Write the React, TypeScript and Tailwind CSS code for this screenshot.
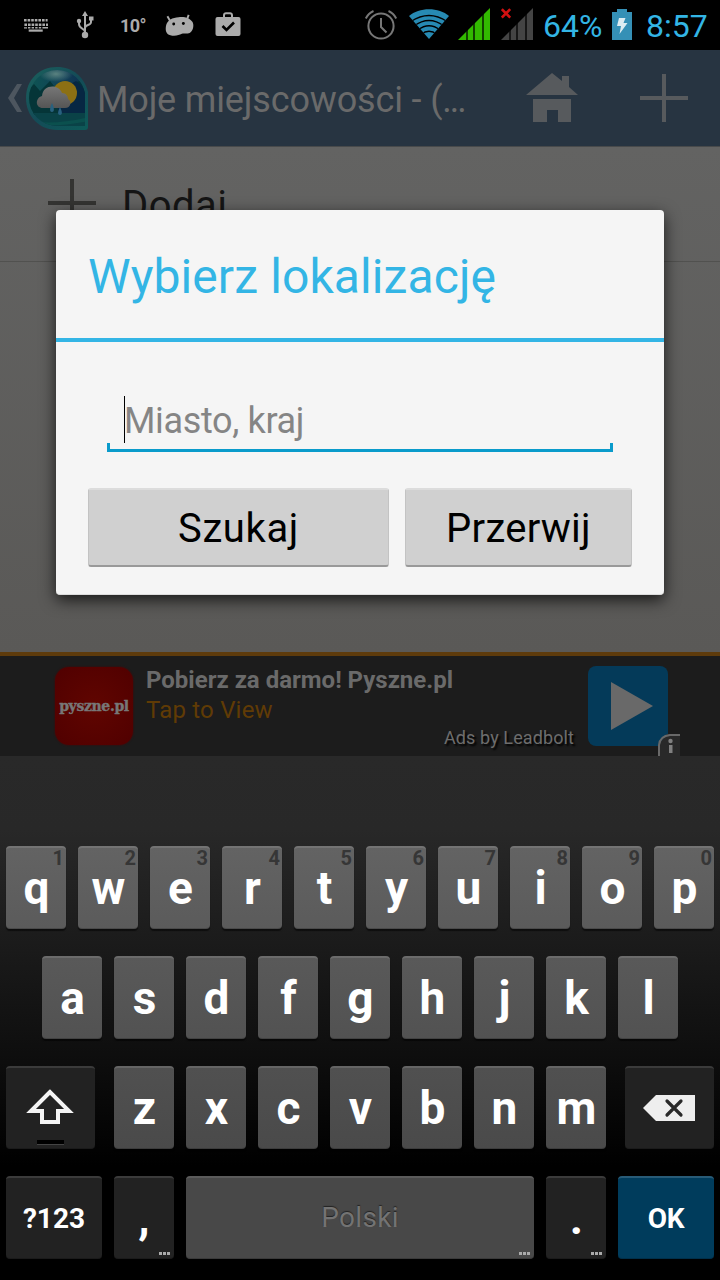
import React from "react";

function StatusBar() {
  return (
    <header className="relative flex h-[50px] shrink-0 items-center bg-black">
      <svg className="ml-6 h-[13px] w-6 shrink-0" viewBox="0 0 24 13" fill="#ababab">
        {[0, 4.5].map((y) =>
          [0, 3.6, 7.2, 10.8, 14.4, 18, 21.6].map((x) => (
            <rect key={`${x}-${y}`} x={x + (y ? 0.4 : 0)} y={y} width={x > 21 ? 2 : 2.6} height="2.5" />
          )),
        )}
        <path d="M0 8.200h3v1.200H0zM4 8h2.400v1.400H4zM7.600 8H10v1.400H7.600zM11.200 8h2.400v1.400h-2.400zM14.800 8h2.400v1.400h-2.400zM18.400 8H24v1.400h-5.600z" />
        <rect x="4.700" y="10.500" width="14" height="2.200" />
      </svg>
      <svg className="ml-[27px] h-7 w-5 shrink-0" viewBox="0 0 20 28" fill="none" stroke="#ababab">
        <path d="M10 25V4M10 21c0-4-6-3-6-8v-3M10 17c0-4 6-2 6-6V8" strokeWidth="2" />
        <path d="M7 5l3-5 3 5zM14 5.500h4.500v4H14z" fill="#ababab" stroke="none" />
        <circle cx="4" cy="10" r="2.200" fill="#ababab" stroke="none" />
        <circle cx="10" cy="24" r="3.200" fill="#ababab" stroke="none" />
      </svg>
      <span className="mt-[2px] ml-[25px] w-6 whitespace-nowrap text-[18px] leading-none font-bold tracking-[-0.6px] text-[#ababab]">10°</span>
      <svg className="ml-[21px] h-[23px] w-[29px] shrink-0" viewBox="0 0 30 23">
        <path d="M5.500 7L2.500 2M23 4.500l1.500-4" stroke="#ababab" strokeWidth="2" fill="none" />
        <path d="M1 12C2 6 8 3.200 14 3c6-1 12 1 14.500 5 1.500 3 1 8-2 10.500-3 2.500-6 .5-9 1.500-3 1-5 2.500-10 2C2 21.500 0 18 1 12z" fill="#ababab" />
        <circle cx="9" cy="10" r="1.500" />
        <circle cx="19" cy="9.500" r="1.500" />
      </svg>
      <svg className="ml-[21px] h-6 w-[26px] shrink-0 -translate-y-px" viewBox="0 0 26 24">
        <path d="M9 6V3a2 2 0 0 1 2-1.800h4A2 2 0 0 1 17 3v3" fill="none" stroke="#ababab" strokeWidth="2" />
        <rect x=".5" y="5" width="25" height="19" rx="2" fill="#ababab" />
        <path d="M7.500 14l4 4L19 10.500" fill="none" stroke="#000" strokeWidth="2.600" />
      </svg>
      <div className="ml-auto flex shrink-0 items-center">
        <svg className="h-[32px] w-[34px]" viewBox="0 0 34 32" fill="none" stroke="#777" strokeWidth="2">
          <circle cx="17" cy="17" r="12.600" />
          <path d="M17 9v9l5.500 5.500M1.800 9.500C3.500 6 6 3.500 9.500 2M24.500 2c3.500 1.500 6 4 7.700 7.500" />
        </svg>
        <svg className="ml-[11px] h-[32px] w-10 -translate-y-px" viewBox="0 0 40 32">
          <clipPath id="wifi"><path d="M0 8C10-1 30-1 40 8L20 31z" /></clipPath>
          <g clipPath="url(#wifi)">
            <rect width="40" height="32" fill="#278ab3" />
            <path d="M2 13.500Q20 1.500 38 13.500M5 18Q20 7 35 18M9 22Q20 13.500 31 22M12 26.500Q20 20 28 26.500" fill="none" stroke="#000" strokeWidth="1.300" />
          </g>
        </svg>
        <svg className="ml-[9px] h-8 w-8 -translate-y-px" viewBox="0 0 32 32">
          <path d="M0 32L32 0v32z" fill="#32b900" />
          <path d="M9 0v32M16 0v32M25 0v32" stroke="#000" strokeWidth="1.300" />
        </svg>
        <svg className="ml-[11px] h-8 w-8 -translate-y-px" viewBox="0 0 32 32">
          <path d="M0 32L32 0v32z" fill="#444" />
          <path d="M9 0v32M16 0v32M25 0v32" stroke="#000" strokeWidth="1.300" />
          <path d="M.8 1.200l8.400 8.400M9.200 1.200L.8 9.600" stroke="#d11010" strokeWidth="2.600" />
        </svg>
        <span className="w-[68px] pt-px pl-[10px] text-[32px] leading-[50px] text-[#33b5e5]">64%</span>
        <svg className="ml-[11px] h-[31px] w-5 -translate-y-px" viewBox="0 0 20 31">
          <path d="M5 0h10v3h5v28H0V3h5z" fill="#3590b6" />
          <path d="M7 9h6.500l-2 5h4L7.500 25l1.500-8H5z" fill="#ddecf2" />
        </svg>
        <span className="ml-[14px] w-[74px] pt-px text-[32px] leading-[50px] text-[#33b5e5]">8:57</span>
      </div>
    </header>
  );
}

function WeatherIcon() {
  return (
    <svg className="ml-1 h-[63px] w-[63px] shrink-0" viewBox="0 0 63 63">
      <defs>
        <linearGradient id="edge" x1="0" y1="0" x2="1" y2="1">
          <stop stopColor="#1b625d" /><stop offset=".5" stopColor="#144b57" /><stop offset="1" stopColor="#0d5a58" />
        </linearGradient>
        <linearGradient id="sky" x2="1">
          <stop stopColor="#0d5751" /><stop offset=".6" stopColor="#123f58" /><stop offset="1" stopColor="#0c2d4d" />
        </linearGradient>
        <radialGradient id="shine"><stop stopColor="#5a8280" /><stop offset="1" stopColor="#5a8280" stopOpacity="0" /></radialGradient>
        <linearGradient id="cloud" x2="0" y2="1"><stop stopColor="#777" /><stop offset="1" stopColor="#555" /></linearGradient>
        <clipPath id="drop"><path d="M31 3a28 28 0 0 1 28 24v32H31A28 28 0 0 1 31 3z" /></clipPath>
      </defs>
      <path d="M31 0c16 0 27 10 31 25v35q0 3-3 3H31C13 63 0 49 0 31S13 0 31 0z" fill="url(#edge)" />
      <g clipPath="url(#drop)">
        <rect width="63" height="63" fill="url(#sky)" />
        <path d="M0 27l6-8 2-2 6 7 10-10 8 10 8-6 14-4 6 8v26H0z" fill="#053538" />
        <path d="M32 24l18-10 5 4 5 8v24H32z" fill="#072743" />
        <path d="M0 46h63v17H0z" fill="#0a4247" />
        <path d="M0 53q26 6 63-3v4q-32 7-63 3z" fill="#0b504e" />
        <ellipse cx="30" cy="7" rx="17" ry="8" fill="url(#shine)" />
      </g>
      <circle cx="39" cy="26" r="12" fill="#8c7014" />
      <path d="M17 41c-8 0-8-10-1-12 1-12 17-12 20-3 4 0 6 3 6 6 4 2 3 9-3 9z" fill="url(#cloud)" />
      <path d="M26 36c-2 4-3 9 0 9s2-5 0-9zM34 40c-2 4-3 8 0 8s2-4 0-8z" fill="#28617f" />
    </svg>
  );
}

function AppBar() {
  return (
    <nav className="flex h-24 shrink-0 items-center bg-[#273441]">
      <svg className="ml-2 h-7 w-[14px] shrink-0" viewBox="0 0 14 28"><path d="M9 0h5L6 14l8 14H9L0 14z" fill="#4d565f" /></svg>
      <WeatherIcon />
      <h1 className="mt-[3px] ml-2 w-[380px] whitespace-nowrap text-[36px] leading-[48px] tracking-[-0.15px] text-[#6a6a6a]">Moje miejscowości - (<span className="tracking-[-2px]">...</span></h1>
      <svg className="ml-[49px] h-[50px] w-[52px] shrink-0 -translate-y-px" viewBox="0 0 52 50" fill="#575a5d">
        <path d="M26 1l10 8V4h7v11l9 8H0zM7 27h38v23H32V38H21v12H7z" />
      </svg>
      <svg className="ml-[62px] h-12 w-12 shrink-0" viewBox="0 0 48 48"><path d="M24 0v48M0 24h48" stroke="#575a5d" strokeWidth="4" /></svg>
    </nav>
  );
}

function LocationList() {
  return (
    <main className="h-[506px] shrink-0 border-t border-[#484a4b] bg-gradient-to-b from-[#636362] to-[#5a5957]">
      <div className="flex h-[115px] border-b border-[#51514f]">
        <svg className="ml-12 mt-[32px] h-12 w-12" viewBox="0 0 48 48"><path d="M24 0v48M0 24h48" stroke="#343432" strokeWidth="4" /></svg>
        <span className="ml-[26px] mt-[34px] text-[40px] leading-[50px] tracking-[0.5px] text-[#151515]">Dodaj</span>
      </div>
    </main>
  );
}

function AdBanner() {
  return (
    <aside className="flex h-[104px] shrink-0 border-t-4 border-[#5e3b0c] bg-[#1c1c1c]">
      <div className="ml-[55px] mt-[11px] flex h-[78px] w-[78px] items-center justify-center rounded-[14px] bg-[radial-gradient(circle,#600500,#500000)] shadow-[0_0_2px_#500000]">
        <span className="font-[DejaVu_Serif,serif] text-[14px] leading-none font-bold tracking-[-0.35px] text-[#777] [-webkit-text-stroke:0.4px_#777]">pyszne.pl</span>
      </div>
      <div className="ml-[13px] flex w-[442px] flex-col">
        <div className="mt-2 h-[30px] whitespace-nowrap text-[24px] leading-[32px] font-bold text-[#6a6a6a]">Pobierz za darmo! Pyszne.pl</div>
        <div className="h-[30px] whitespace-nowrap text-[24px] leading-[33px] tracking-[0.2px] text-[#603b05]">Tap to View</div>
        <div className="w-[428px] text-right text-[18px] leading-[28px] tracking-[0.1px] text-[#6d6d6d] [text-shadow:2px_2px_2px_#000]">Ads by Leadbolt</div>
      </div>
      <div className="relative mt-2.5 h-20 w-20">
        <svg className="h-20 w-20" viewBox="0 0 80 80">
          <rect width="80" height="80" rx="8" fill="#043a59" />
          <path d="M23 16v48l42-24z" fill="#696969" />
        </svg>
        <svg className="absolute top-[68px] left-[70px] h-[22px] w-[22px]" viewBox="0 0 22 22">
          <path d="M0 22V11L9 0h13v22z" fill="#292929" />
          <path d="M1 22V11Q2 2 12 1h10" stroke="#696969" strokeWidth="2" fill="none" />
          <circle cx="12.500" cy="7" r="2.200" fill="#808080" />
          <rect x="11" y="11" width="3.500" height="8" fill="#808080" />
        </svg>
      </div>
    </aside>
  );
}

const keyBase = "relative flex h-[83px] items-center justify-center rounded-[4px] border-t-2 border-b";
const lightTop = "border-t-white/15 border-b-black/25";

function LetterKey({ letter, hint, tone }: { letter: string; hint?: string; tone: string }) {
  return (
    <button className={`${keyBase} ${lightTop} w-[60px] shadow-[0_2px_1px_#0008] ${tone}`}>
      <span className="pl-px text-[46px] leading-[60px] font-bold text-white">{letter}</span>
      {hint && <span className="absolute top-0 right-[2px] text-[20px] leading-[20px] font-bold text-[#363636]">{hint}</span>}
    </button>
  );
}

function Dots() {
  return (
    <span className="absolute right-[4px] bottom-[3px] flex gap-px">
      <i className="h-[3px] w-[3px] bg-[#aaa]" /><i className="h-[3px] w-[3px] bg-[#aaa]" /><i className="h-[3px] w-[3px] bg-[#aaa]" />
    </span>
  );
}

const dark = "bg-[#222] border-t-[#3b3b3b] border-b-[#1b1b1b]";

function Keyboard() {
  return (
    <section className="flex h-[524px] shrink-0 flex-col gap-[27px] bg-[linear-gradient(180deg,#292929_0,#282828_74px,#0f0f0f_290px,#000_410px)] px-1.5 pt-[90px]">
      <div className="flex gap-3">
        {"qwertyuiop".split("").map((c, i) => (
          <LetterKey key={c} letter={c} hint={String((i + 1) % 10)} tone="bg-gradient-to-b from-[#636363] to-[#5b5b5b]" />
        ))}
      </div>
      <div className="flex justify-center gap-3">
        {"asdfghjkl".split("").map((c) => <LetterKey key={c} letter={c} tone="bg-gradient-to-b from-[#595959] to-[#525252]" />)}
      </div>
      <div className="flex justify-between">
        <button className={`${keyBase} ${dark} w-[89px]`}>
          <svg className="-mt-0.5 mr-0.5 h-9 w-12" viewBox="0 0 48 36"><path d="M24 3L5 22h11v11h16V22h11z" fill="none" stroke="#f4f4f4" strokeWidth="4" /></svg>
          <span className="absolute bottom-[3px] left-[31px] h-[5px] w-[27px] border-b border-[#444] bg-black" />
        </button>
        <div className="flex gap-3">
          {"zxcvbnm".split("").map((c) => <LetterKey key={c} letter={c} tone="bg-gradient-to-b from-[#505050] to-[#4a4a4a]" />)}
        </div>
        <button className={`${keyBase} ${dark} w-[89px]`}>
          <svg className="mr-0.5 h-[26px] w-[52px]" viewBox="0 0 52 26">
            <path d="M0 13L13 0h39v26H13z" fill="#eee" />
            <path d="M24 6l14 14M38 6L24 20" stroke="#292929" strokeWidth="3.200" strokeLinecap="round" />
          </svg>
        </button>
      </div>
      <div className="flex gap-3">
        <button className={`${keyBase} ${dark} w-24 pt-0.5 text-[28px] font-bold text-white`}>?123</button>
        <button className={`${keyBase} ${dark} w-[60px]`}><span className="text-[46px] leading-[60px] font-bold text-white">,</span><Dots /></button>
        <button className={`${keyBase} w-[348px] border-t-[#5b5b5b] border-b-[#3a3a3a] bg-[#484848] text-[28px] tracking-[0.3px] text-[#737373] [text-shadow:0_-1px_1px_#222]`}>Polski<Dots /></button>
        <button className={`${keyBase} ${dark} w-[60px]`}><span className="pl-px text-[46px] leading-[60px] font-bold text-white">.</span><Dots /></button>
        <button className={`${keyBase} w-24 border-t-[#285b77] border-b-[#00304b] bg-[#003c5c] pt-0.5 text-[28px] font-bold tracking-[-0.4px] text-white`}>OK</button>
      </div>
    </section>
  );
}

function LocationDialog() {
  const button = "h-[79px] rounded-[3px] border border-t-2 border-b-2 border-x-[#c3c3c3] border-t-[#dcdcdc] border-b-[#999] bg-[#d0d0d0] pt-[3px] text-[40px] leading-none text-black";
  return (
    <div role="dialog" className="absolute top-[210px] left-[56px] flex h-[385px] w-[608px] flex-col rounded-[4px] border-b border-[#ddd] bg-[#f5f5f5] shadow-[0_5px_16px_#000b]">
      <h2 className="h-[132px] shrink-0 border-b-4 border-[#33b5e5] pl-8 text-[48px] leading-[134px] tracking-[0.1px] text-[#33b5e5]">Wybierz lokalizację</h2>
      <div className="mt-[54px] ml-[51px] w-[506px]">
        <div className="ml-[17px] flex h-[47px] items-center border-l border-black text-[36px] leading-none tracking-[-0.35px] text-[#858585]"><span className="mt-[3px] -ml-px">Miasto, kraj</span></div>
        <div className="flex h-[9px] items-end justify-between border-b-[3px] border-[#0a9bcb]">
          <i className="h-[6px] w-[3px] bg-[#0a9bcb]" /><i className="h-[6px] w-[3px] bg-[#0a9bcb]" />
        </div>
      </div>
      <div className="mt-9 flex gap-4 px-8">
        <button className={`${button} w-[301px] tracking-[0.6px]`}>Szukaj</button>
        <button className={`${button} w-[227px] tracking-[0.25px]`}>Przerwij</button>
      </div>
    </div>
  );
}

export default function App() {
  return (
    <div className="relative flex h-[1280px] w-[720px] flex-col overflow-hidden bg-black font-[Roboto,sans-serif]">
      <StatusBar />
      <AppBar />
      <LocationList />
      <AdBanner />
      <Keyboard />
      <LocationDialog />
    </div>
  );
}
